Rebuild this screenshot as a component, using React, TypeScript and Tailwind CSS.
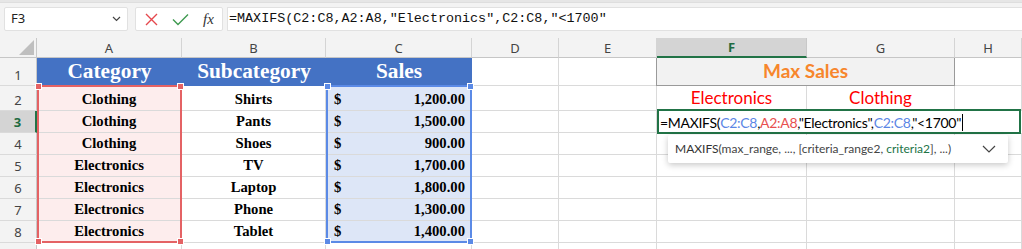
import React from 'react';

const COLS = ['A', 'B', 'C', 'D', 'E', 'F', 'G', 'H'];

const ROWS: [string, string, string][] = [
  ['Clothing', 'Shirts', '1,200.00'],
  ['Clothing', 'Pants', '1,500.00'],
  ['Clothing', 'Shoes', '900.00'],
  ['Electronics', 'TV', '1,700.00'],
  ['Electronics', 'Laptop', '1,800.00'],
  ['Electronics', 'Phone', '1,300.00'],
  ['Electronics', 'Tablet', '1,400.00'],
];

const gridLine = 'border-r border-b border-[#dadada]';
const serifBold = "font-['Liberation_Serif',serif] font-bold text-[14.67px] leading-[17px] text-black";
const uiFont = "font-['Noto_Sans',sans-serif]";

const Toolbar: React.FC = () => (
  <div className="h-[38px] bg-[#f3f3f3]">
    <div className="h-[3px] bg-[#e6e6e6] border-b border-[#dedede]" />
    <div className="flex pt-[4px]">
      <div className={`ml-[4px] w-[124px] h-[24px] bg-white border border-[#e1e1e1] rounded-[2px] flex items-center justify-between pl-[6px] pr-[6px] ${uiFont} text-[13px] text-[#222]`}>
        <span>F3</span>
        <svg width="9" height="6" viewBox="0 0 9 6" fill="none" stroke="#444" strokeWidth="1.2">
          <path d="M1 1l3.5 3.5L8 1" />
        </svg>
      </div>
      <div className="ml-[7px] w-[88px] h-[24px] bg-white border border-[#e1e1e1] rounded-[2px] flex items-center pl-[9px]">
        <svg width="13" height="13" viewBox="0 0 13 13" fill="none" stroke="#e5484d" strokeWidth="1.4">
          <path d="M1 1l11 11M12 1L1 12" />
        </svg>
        <svg className="ml-[14px]" width="17" height="13" viewBox="0 0 17 13" fill="none" stroke="#3f9a50" strokeWidth="1.4">
          <path d="M1 6.5l5 5L16 1.5" />
        </svg>
        <span className="ml-[14px] font-['Liberation_Serif',serif] italic text-[15px] text-[#333] leading-none">fx</span>
      </div>
      <div className="ml-[4px] flex-1 h-[24px] bg-white border-y border-l border-[#e1e1e1] flex items-center pl-[1px] font-['Liberation_Mono',monospace] text-[13.4px] text-[#111] whitespace-pre">
        =MAXIFS(C2:C8,A2:A8,"Electronics",C2:C8,"&lt;1700"
      </div>
    </div>
  </div>
);

const RowHead: React.FC<{ n?: number; active?: boolean }> = ({ n, active }) => (
  <div
    className={`flex items-end justify-center pb-[1px] border-b border-[#dadada] ${uiFont} text-[13px] leading-[17px] ${
      active
        ? 'bg-[#d4d4d4] text-[#1e6b41] font-bold border-r-2 border-r-[#217346]'
        : 'bg-[#f3f3f3] text-[#444] border-r border-r-[#c8c8c8]'
    }`}
  >
    {n}
  </div>
);

const Handle: React.FC<{ color: string; pos: string }> = ({ color, pos }) => (
  <div className={`absolute w-[7px] h-[7px] border border-white ${color} ${pos}`} />
);

const Selection: React.FC<{ left: string; width: string; border: string; fill: string }> = ({ left, width, border, fill }) => (
  <div className={`absolute top-[47px] h-[158px] border-2 ${left} ${width} ${border} pointer-events-none`}>
    <Handle color={fill} pos="-left-[4px] -top-[4px]" />
    <Handle color={fill} pos="-right-[4px] -top-[4px]" />
    <Handle color={fill} pos="-left-[4px] -bottom-[4px]" />
    <Handle color={fill} pos="-right-[4px] -bottom-[4px]" />
  </div>
);

export default function App() {
  return (
    <div className="relative w-[1022px] h-[249px] overflow-hidden bg-white">
      <Toolbar />
      <div className="relative grid grid-cols-[37px_145px_144px_146px_87px_98px_150px_148px_67px] grid-rows-[20px_28px_25px_repeat(6,22px)_20px]">
        {/* column headers */}
        <div className="relative bg-[#f3f3f3] border-r border-r-[#c8c8c8] border-b border-b-[#c6c6c6]">
          <svg className="absolute right-[2px] bottom-[2px]" width="15" height="15" viewBox="0 0 15 15">
            <path d="M15 0V15H0Z" fill="#bfbfbf" />
          </svg>
        </div>
        {COLS.map(c =>
          c === 'F' ? (
            <div key={c} className={`flex items-center justify-center pt-[2px] bg-[#d4d4d4] border-r border-r-[#c8c8c8] border-b-2 border-b-[#217346] ${uiFont} text-[13px] font-bold text-[#1e6b41]`}>
              {c}
            </div>
          ) : (
            <div key={c} className={`flex items-center justify-center pt-[3px] bg-[#f3f3f3] border-r border-r-[#d4d4d4] border-b border-b-[#c6c6c6] ${uiFont} text-[13px] text-[#444]`}>
              {c}
            </div>
          )
        )}

        {/* row 1 */}
        <RowHead n={1} />
        {['Category', 'Subcategory', 'Sales'].map(t => (
          <div key={t} className="flex items-center justify-center pt-[1px] bg-[#4472c4] border-b border-[#4472c4] font-['Liberation_Serif',serif] font-bold text-[21.33px] text-white">
            {t}
          </div>
        ))}
        <div className={gridLine} />
        <div className={gridLine} />
        <div className="col-span-2 flex items-center justify-center bg-[#f2f2f2] border-l border-r border-b border-[#9a9a9a] -ml-px font-['Lato',sans-serif] font-bold text-[19px] text-[#f7862c]">
          Max Sales
        </div>
        <div className={gridLine} />

        {/* data rows */}
        {ROWS.map(([cat, sub, amt], i) => (
          <React.Fragment key={i}>
            <RowHead n={i + 2} active={i === 1} />
            <div className={`flex items-end justify-center pb-[2.5px] bg-[#fdeded] ${gridLine} ${serifBold}`}>{cat}</div>
            <div className={`flex items-end justify-center pb-[2.5px] ${gridLine} ${serifBold}`}>{sub}</div>
            <div className={`flex items-end justify-between pb-[2.5px] pl-[8px] pr-[6px] bg-[#dde6f7] ${gridLine} ${serifBold}`}>
              <span>$</span>
              <span>{amt}</span>
            </div>
            <div className={gridLine} />
            <div className={gridLine} />
            {i === 0 && (
              <>
                <div className={`flex items-end justify-center ${gridLine} font-['Lato',sans-serif] text-[17px] text-[#ff0000]`}>Electronics</div>
                <div className={`flex items-end justify-center ${gridLine} font-['Lato',sans-serif] text-[17px] text-[#ff0000]`}>Clothing</div>
                <div className={gridLine} />
              </>
            )}
            {i === 1 && (
              <div className="col-span-3 flex items-center pl-[3px] pt-[1px] bg-white font-['Lato',sans-serif] text-[14px] tracking-[-0.3px] text-black whitespace-pre">
                <span>=MAXIFS(</span>
                <span className="text-[#5b86e5]">C2:C8</span>
                <span>,</span>
                <span className="text-[#e8504f]">A2:A8</span>
                <span>,"Electronics",</span>
                <span className="text-[#5b86e5]">C2:C8</span>
                <span>,"&lt;1700"</span>
                <span className="ml-[1px] w-px h-[17px] bg-black" />
              </div>
            )}
            {i > 1 && (
              <>
                <div className={gridLine} />
                <div className={gridLine} />
                <div className={gridLine} />
              </>
            )}
          </React.Fragment>
        ))}

        {/* row 9 */}
        <RowHead />
        {COLS.map(c => (
          <div key={c} className={gridLine} />
        ))}

        {/* overlays */}
        <Selection left="left-[37px]" width="w-[145px]" border="border-[#e46264]" fill="bg-[#e46264]" />
        <Selection left="left-[326px]" width="w-[146px]" border="border-[#5b8ae6]" fill="bg-[#5b8ae6]" />
        <div className="absolute left-[657px] top-[71px] w-[364px] h-[25px] border-2 border-[#217346] pointer-events-none" />
        <div className="absolute left-[668px] top-[97px] w-[340px] h-[28px] bg-white shadow-[0_2px_6px_rgba(0,0,0,0.22)] rounded-[2px] flex items-center justify-between pl-[7px] pr-[12px] font-['Lato',sans-serif] text-[12px] text-[#444] whitespace-pre">
          <span>
            <span className="text-[#333]">MAXIFS</span>(max_range, ..., [criteria_range2, <span className="text-[#217346]">criteria2</span>], ...)
          </span>
          <svg width="14" height="8" viewBox="0 0 14 8" fill="none" stroke="#444" strokeWidth="1.2">
            <path d="M1 1l6 6 6-6" />
          </svg>
        </div>
      </div>
    </div>
  );
}
